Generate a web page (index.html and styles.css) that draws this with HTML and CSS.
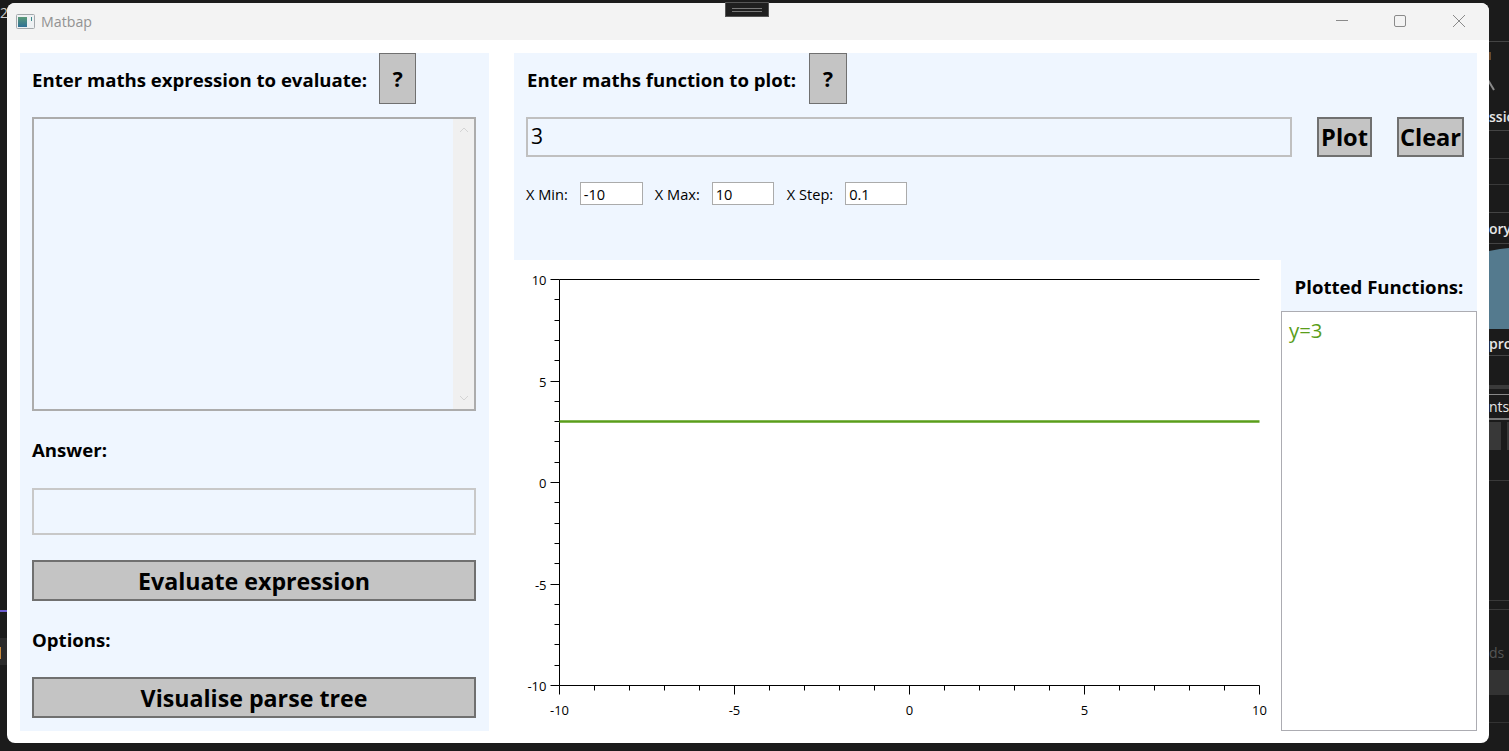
FILE: index.html
```html
<!DOCTYPE html>
<html lang="en">
<head>
    <meta charset="UTF-8">
    <meta name="viewport" content="width=device-width, initial-scale=1.0">
    <title>Matbap</title>
    <link rel="stylesheet" href="styles.css">
</head>
<body>
    <!-- Bits of the desktop behind the window -->
    <svg class="desktop" width="1509" height="751" viewBox="0 0 1509 751">
        <rect x="1489" y="41" width="20" height="1" fill="#444"/>
        <rect x="1489" y="52" width="2" height="8" fill="#6b4a2c"/>
        <rect x="1489" y="130" width="20" height="1" fill="#444"/>
        <rect x="1489" y="158" width="20" height="1" fill="#3a3a3a"/>
        <rect x="1489" y="184" width="20" height="1" fill="#3a3a3a"/>
        <rect x="1489" y="212" width="20" height="1" fill="#444"/>
        <rect x="1489" y="243" width="20" height="1" fill="#444"/>
        <path d="M1489 251L1500 249L1509 248V329H1489Z" fill="#547a8e"/>
        <rect x="1489" y="355" width="20" height="1" fill="#444"/>
        <rect x="1489" y="385" width="20" height="4" fill="#3a3a3a"/>
        <rect x="1489" y="394" width="20" height="1" fill="#888"/>
        <rect x="1489" y="418" width="20" height="2" fill="#777"/>
        <rect x="1489" y="422" width="12" height="28" fill="#383838"/>
        <rect x="1507" y="422" width="2" height="28" fill="#383838"/>
        <rect x="1489" y="480" width="20" height="1" fill="#3a3a3a"/>
        <rect x="1489" y="600" width="20" height="1" fill="#3a3a3a"/>
        <rect x="1489" y="609" width="20" height="1" fill="#3a3a3a"/>
        <rect x="1489" y="670" width="20" height="25" fill="#333"/>
        <rect x="1489" y="722" width="20" height="1" fill="#333"/>
        <path d="M1488 80L1494 90" stroke="#8a8a8a" stroke-width="2" fill="none"/>
        <rect x="0" y="610" width="7" height="2" fill="#6a5acd"/>
        <rect x="0" y="638" width="7" height="27" fill="#2b2b2b"/>
        <rect x="0" y="647" width="1" height="12" fill="#c98a3c"/>
    </svg>
    <div class="desk-text desk-ssic">ssic</div>
    <div class="desk-text desk-ory">ory</div>
    <div class="desk-text desk-pro">pro</div>
    <div class="desk-text desk-nts">nts</div>
    <div class="desk-text desk-ds">ds</div>
    <div class="desk-num">2</div>
    <div class="snap-handle"><span></span></div>

    <div class="window">
        <div class="titlebar">
            <svg class="app-icon" width="20" height="16" viewBox="0 0 20 16">
                <defs>
                    <linearGradient id="iconFill" x1="0" y1="0" x2="0" y2="1">
                        <stop offset="0" stop-color="#5a9a78"/>
                        <stop offset="1" stop-color="#2f7096"/>
                    </linearGradient>
                </defs>
                <rect x="0.5" y="0.5" width="18" height="14" rx="1" fill="#eef1f3" stroke="#a4a8ac"/>
                <rect x="2" y="3" width="9" height="10" fill="url(#iconFill)"/>
                <rect x="15" y="3" width="1" height="4" fill="#3f8a8c"/>
            </svg>
            <span class="app-name">Matbap</span>
            <div class="win-controls">
                <svg width="14" height="14" viewBox="0 0 14 14"><path d="M2 6.5H14" stroke="#8a8a8a" fill="none"/></svg>
                <svg width="14" height="14" viewBox="0 0 14 14"><rect x="1.5" y="1.5" width="11" height="11" rx="1.5" stroke="#8a8a8a" fill="none"/></svg>
                <svg width="14" height="14" viewBox="0 0 14 14"><path d="M1 1L13 13M13 1L1 13" stroke="#8a8a8a" fill="none"/></svg>
            </div>
        </div>

        <div class="content">
            <!-- Expression panel -->
            <div class="left-panel">
                <div class="heading-row">
                    <h2>Enter maths expression to evaluate:</h2>
                    <button class="help-btn">?</button>
                </div>
                <div class="expr-box">
                    <div class="fake-scroll">
                        <svg width="10" height="6" viewBox="0 0 10 6"><path d="M1 5L5 1L9 5" stroke="#d4d4d4" fill="none"/></svg>
                        <svg width="10" height="6" viewBox="0 0 10 6"><path d="M1 1L5 5L9 1" stroke="#d4d4d4" fill="none"/></svg>
                    </div>
                </div>
                <h2 class="answer-label">Answer:</h2>
                <div class="answer-box"></div>
                <button class="wide-btn evaluate-btn">Evaluate expression</button>
                <h2 class="options-label">Options:</h2>
                <button class="wide-btn visualise-btn">Visualise parse tree</button>
            </div>

            <!-- Plot panel -->
            <div class="right-panel">
                <div class="plot-controls">
                    <div class="heading-row">
                        <h2>Enter maths function to plot:</h2>
                        <button class="help-btn plot-help">?</button>
                    </div>
                    <div class="function-row">
                        <div class="function-input">3</div>
                        <button class="big-btn plot-btn">Plot</button>
                        <button class="big-btn clear-btn">Clear</button>
                    </div>
                    <div class="range-row">
                        <label>X Min:</label><div class="range-input">-10</div>
                        <label>X Max:</label><div class="range-input range-max">10</div>
                        <label>X Step:</label><div class="range-input range-step">0.1</div>
                    </div>
                </div>
                <div class="plot-row">
                    <div class="plot-area">
                        <svg id="plot" width="767" height="471" viewBox="0 0 767 471"></svg>
                    </div>
                    <div class="functions-side">
                        <h2>Plotted Functions:</h2>
                        <div class="functions-list">y=3</div>
                    </div>
                </div>
            </div>
        </div>
    </div>
    <script src="plot.js"></script>
</body>
</html>
```

FILE: styles.css
```css
* {
    box-sizing: border-box;
}

body {
    font-family: 'Open Sans', 'Noto Sans', sans-serif;
    margin: 0;
    width: 1509px;
    height: 751px;
    overflow: hidden;
    position: relative;
    background-color: #1b1b1b;
}

/* desktop scraps */
.desktop {
    position: absolute;
    left: 0;
    top: 0;
}

.desk-text {
    position: absolute;
    left: 1489px;
    font-size: 14px;
    font-weight: 600;
    color: #e6e6e6;
}

.desk-ssic { top: 107px; }
.desk-ory { top: 219px; }
.desk-pro { top: 334px; }
.desk-nts { top: 397px; font-weight: 400; }
.desk-ds { top: 643px; font-weight: 400; color: #555; }

.desk-num {
    position: absolute;
    left: 0;
    top: 3px;
    font-size: 14px;
    color: #ccc;
}

.snap-handle {
    position: absolute;
    left: 725px;
    top: 2px;
    width: 44px;
    height: 15px;
    z-index: 2;
    background-color: #1f1f1f;
    border: 1px solid #555;
    display: flex;
    align-items: center;
    justify-content: center;
}

.snap-handle span {
    display: block;
    width: 30px;
    height: 4px;
    border-top: 1px solid #777;
    border-bottom: 1px solid #777;
}

.window {
    position: absolute;
    left: 7px;
    top: 3px;
    width: 1482px;
    height: 740px;
    background-color: #fff;
    border-radius: 8px;
    overflow: hidden;
    display: flex;
    flex-direction: column;
}

.titlebar {
    height: 37px;
    flex: none;
    background-color: #f3f3f3;
    display: flex;
    align-items: center;
    padding-left: 9px;
}

.app-icon {
    margin-right: 5px;
}

.app-name {
    font-size: 14.2px;
    color: #929292;
}

.win-controls {
    margin-left: auto;
    margin-bottom: 1px;
    display: flex;
    gap: 45px;
    padding-right: 23px;
}

.content {
    flex: 1;
    min-height: 0;
    display: flex;
    padding: 13px 12px 12px 13px;
    gap: 25px;
}

h2 {
    margin: 0;
    font-size: 18.6px;
    font-weight: 700;
    color: #000;
}

button {
    font-family: inherit;
    font-weight: 700;
    color: #000;
    background-color: #c4c4c4;
    border: 1px solid #707070;
    padding: 0;
}

.left-panel {
    width: 469px;
    flex: none;
    background-color: #eff6ff;
    padding: 0 13px 0 12px;
}

.heading-row {
    display: flex;
    align-items: center;
    height: 51px;
}

.heading-row h2 {
    padding-top: 2px;
}

.help-btn {
    width: 37px;
    height: 51px;
    font-size: 21px;
    margin-left: 12px;
}

.plot-help {
    width: 38px;
    margin-left: 13px;
}

.expr-box {
    height: 294px;
    margin-top: 13px;
    border: 2px solid #acacac;
    display: flex;
    justify-content: flex-end;
}

.fake-scroll {
    width: 21px;
    background-color: #f0f0f0;
    display: flex;
    flex-direction: column;
    justify-content: space-between;
    align-items: center;
    padding: 8px 0;
}

.answer-label {
    margin-top: 26px;
    line-height: 25px;
}

.answer-box {
    height: 47px;
    margin-top: 26px;
    border: 2px solid #c8c8c8;
}

.wide-btn {
    display: block;
    width: 100%;
    height: 41px;
    border-width: 2px;
    padding-top: 3px;
    font-size: 23.2px;
    line-height: 1;
}

.evaluate-btn {
    margin-top: 25px;
}

.options-label {
    margin-top: 26px;
    line-height: 25px;
}

.visualise-btn {
    margin-top: 25px;
}

.right-panel {
    flex: 1;
    min-width: 0;
    display: flex;
    flex-direction: column;
}

.plot-controls {
    height: 207px;
    flex: none;
    background-color: #eff6ff;
    padding: 0 13px;
}

.function-row {
    display: flex;
    margin-top: 13px;
    height: 40px;
}

.function-input {
    flex: 1;
    min-width: 0;
    margin-left: -1px;
    border: 2px solid #c0c0c0;
    font-size: 21px;
    line-height: 34px;
    padding-left: 3px;
}

.big-btn {
    height: 40px;
    border-width: 2px;
    padding-top: 2px;
    font-size: 23.6px;
    line-height: 1;
}

.plot-btn {
    width: 55px;
    margin-left: 25px;
}

.clear-btn {
    width: 67px;
    margin-left: 25px;
}

.range-row {
    display: flex;
    align-items: center;
    margin-top: 25px;
    margin-left: -1px;
    font-size: 14.6px;
    height: 23px;
}

.range-row label {
    margin-right: 12px;
}

.range-input {
    width: 63px;
    height: 23px;
    border: 1px solid #ababab;
    margin-right: 12px;
    padding-left: 3px;
    line-height: 23px;
    background-color: #fff;
}

.range-max {
    width: 62px;
    margin-right: 13px;
}

.range-step {
    width: 62px;
}

.plot-row {
    flex: 1;
    min-height: 0;
    display: flex;
}

.plot-area {
    width: 767px;
    flex: none;
    background-color: #fff;
}

#plot {
    display: block;
}

#plot text {
    font-family: 'Open Sans', 'Noto Sans', sans-serif;
    font-size: 13px;
    fill: #000;
}

.functions-side {
    flex: 1;
    min-width: 0;
    display: flex;
    flex-direction: column;
}

.functions-side h2 {
    height: 51px;
    flex: none;
    line-height: 54px;
    background-color: #eff6ff;
    text-align: center;
    white-space: nowrap;
}

.functions-list {
    flex: 1;
    border: 1px solid #acacb2;
    background-color: #fff;
    color: #5a9e1a;
    font-size: 20.4px;
    line-height: 27px;
    padding: 5px 7px;
}
```

FILE: plot.js
```js
// draw the axes, ticks and the y=3 line
const svg = document.getElementById('plot');
const NS = 'http://www.w3.org/2000/svg';

const left = 45.5, right = 745.5;
const top_ = 19.5, bottom = 425.5;

function line(x1, y1, x2, y2, color, width) {
    const el = document.createElementNS(NS, 'line');
    el.setAttribute('x1', x1);
    el.setAttribute('y1', y1);
    el.setAttribute('x2', x2);
    el.setAttribute('y2', y2);
    el.setAttribute('stroke', color);
    el.setAttribute('stroke-width', width);
    svg.appendChild(el);
}

function label(x, y, anchor, str) {
    const el = document.createElementNS(NS, 'text');
    el.setAttribute('x', x);
    el.setAttribute('y', y);
    el.setAttribute('text-anchor', anchor);
    el.textContent = str;
    svg.appendChild(el);
}

line(left, top_, right, top_, '#000', 1);
line(left, top_, left, bottom, '#000', 1);
line(left, bottom, right, bottom, '#000', 1);

for (let i = 0; i <= 20; i++) {
    const major = i % 5 === 0;
    const x = Math.round(left - 0.5 + i * 35) + 0.5;
    const y = Math.round(bottom - 0.5 - i * 20.3) + 0.5;
    line(x, bottom, x, bottom + (major ? 9 : 5), '#000', 1);
    line(left - (major ? 9 : 5), y, left, y, '#000', 1);
    if (major) {
        const value = String(-10 + i);
        label(x, bottom + 29, 'middle', value);
        label(left - 13, y + 5, 'end', value);
    }
}

line(left, 161.5, right, 161.5, '#5a9e1a', 2.5);
```
